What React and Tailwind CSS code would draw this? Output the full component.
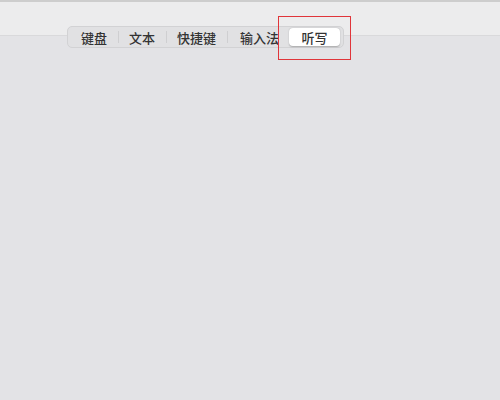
export default function App() {
    const tabs = ["键盘", "文本", "快捷键", "输入法"];

    return (
        <div className="relative w-[500px] h-[400px] bg-[#e3e3e6] overflow-hidden" style={{ fontFamily: '"Noto Sans CJK SC", sans-serif' }}>
            <div className="h-[36px] bg-[#ececed] border-t-2 border-[#cdcdcd] border-b border-b-[#d9d9db]"></div>

            <div className="absolute left-[67px] top-[26px] flex items-center h-[22px] pl-[2px] pr-[3px] rounded-[5px] bg-[#e1e1e3] border border-[#d2d2d4]">
                {tabs.map((t, i) => (
                    <div key={t} className="flex items-center">
                        <span className={`text-[13px] leading-none font-medium text-[#333] ${i === 0 ? "pl-[11px]" : i === 3 ? "pl-[12px]" : "pl-[10px]"} ${i === 3 ? "pr-[10px]" : "pr-[11px]"}`}>{t}</span>
                        {i < 3 && <span className="w-px h-[12px] bg-[#cfcfd1]"></span>}
                    </div>
                ))}
                <span className="flex items-center justify-center w-[51px] h-[18px] rounded-[4px] bg-white shadow-[0_0.5px_1.5px_rgba(0,0,0,0.25)] text-[13px] leading-none font-medium text-[#333]">听写</span>
            </div>

            <div className="absolute left-[278px] top-[16px] w-[73px] h-[44px] border border-[#e0353a]"></div>
        </div>
    );
}
